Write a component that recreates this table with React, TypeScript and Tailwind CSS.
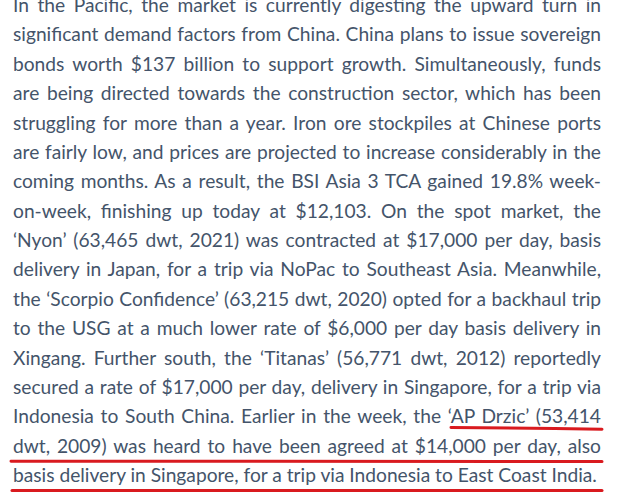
const lines = [
  'In the Pacific, the market is currently digesting the upward turn in',
  'significant demand factors from China. China plans to issue sovereign',
  'bonds worth $137 billion to support growth. Simultaneously, funds',
  'are being directed towards the construction sector, which has been',
  'struggling for more than a year. Iron ore stockpiles at Chinese ports',
  'are fairly low, and prices are projected to increase considerably in the',
  'coming months. As a result, the BSI Asia 3 TCA gained 19.8% week-',
  'on-week, finishing up today at $12,103. On the spot market, the',
  '‘Nyon’ (63,465 dwt, 2021) was contracted at $17,000 per day, basis',
  'delivery in Japan, for a trip via NoPac to Southeast Asia. Meanwhile,',
  'the ‘Scorpio Confidence’ (63,215 dwt, 2020) opted for a backhaul trip',
  'to the USG at a much lower rate of $6,000 per day basis delivery in',
  'Xingang. Further south, the ‘Titanas’ (56,771 dwt, 2012) reportedly',
  'secured a rate of $17,000 per day, delivery in Singapore, for a trip via',
  'Indonesia to South China. Earlier in the week, the ‘AP Drzic’ (53,414',
  'dwt, 2009) was heard to have been agreed at $14,000 per day, also',
];

const lastLine = 'basis delivery in Singapore, for a trip via Indonesia to East Coast India.';

export default function App() {
  return (
    <div className="relative h-[494px] w-[620px] overflow-hidden bg-white">
      {/* Paragraph */}
      <div className="-mt-[10px] ml-[13px] w-[588px] font-['Lato',sans-serif] text-[19.2px] leading-[29.375px] text-[#44546a]">
        {lines.map((l) => (
          <div key={l} className="text-justify [text-align-last:justify]">
            {l}
          </div>
        ))}
        <div className="text-left">{lastLine}</div>
      </div>

      {/* Red annotation strokes */}
      <svg className="pointer-events-none absolute inset-0" width="620" height="494" viewBox="0 0 620 494">
        <g fill="none" stroke="#d91a1f" strokeWidth="3" strokeLinecap="round">
          <path d="M451 427.6 Q 526 428 602 429.2" />
          <path d="M11 461.2 Q 306 461 602 461.6" />
          <path d="M12 490.4 Q 306 490.6 602 490.4" />
        </g>
      </svg>
    </div>
  );
}
